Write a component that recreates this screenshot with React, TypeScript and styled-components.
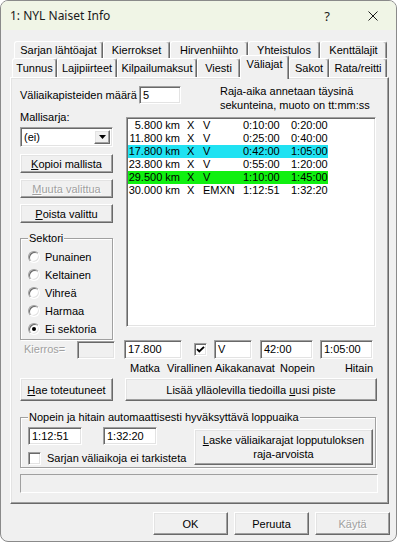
import React from "react";
import styled, { createGlobalStyle, css } from "styled-components";

const GlobalStyle = createGlobalStyle`
  html, body { margin: 0; padding: 0; background: #ffffff; }
  body {
    font-family: "Liberation Sans", Arial, sans-serif;
    font-size: 11px;
    color: #000;
  }
  * { box-sizing: border-box; }
`;

const raised = css`
  border: 1px solid;
  border-color: #ffffff #696969 #696969 #ffffff;
  box-shadow: inset -1px -1px 0 #a0a0a0, inset 1px 1px 0 #e3e3e3;
`;

const sunken = css`
  border: 1px solid;
  border-color: #a0a0a0 #ffffff #ffffff #a0a0a0;
  box-shadow: inset 1px 1px 0 #696969, inset -1px -1px 0 #e3e3e3;
`;

const Window = styled.div`
  width: 397px;
  height: 542px;
  border: 1px solid #8a8a8a;
  border-radius: 8px;
  overflow: hidden;
  background: #f0f0f0;
  display: flex;
  flex-direction: column;
`;

const TitleBar = styled.div`
  height: 29px;
  flex: none;
  background: #f0f5e6;
  display: flex;
  align-items: center;
  padding-left: 9px;
  font-family: "Noto Sans", "Open Sans", sans-serif;
  font-size: 12px;
  color: #1a1a1a;
`;

const TitleText = styled.div`
  flex: 1;
  white-space: nowrap;
`;

const CaptionButton = styled.div`
  width: 46px;
  height: 29px;
  display: flex;
  align-items: center;
  justify-content: center;
  font-size: 13px;
`;

const TabStrip = styled.div`
  padding-top: 11px;
  flex: none;
`;

const TabRow = styled.div<{ $indent: number; $h: number }>`
  display: flex;
  height: ${(p) => p.$h}px;
  padding-left: ${(p) => p.$indent}px;
`;

const Tab = styled.div<{ $w: number; $active?: boolean }>`
  width: ${(p) => p.$w}px;
  flex: none;
  display: flex;
  align-items: center;
  justify-content: center;
  white-space: nowrap;
  background: #f0f0f0;
  border-top: 1px solid #ffffff;
  border-left: 1px solid #ffffff;
  border-right: 1px solid #696969;
  box-shadow: inset -1px 0 0 #a0a0a0;
  border-radius: 3px 3px 0 0;
  ${(p) =>
    p.$active &&
    css`
      height: 24px;
      align-self: flex-end;
      margin-bottom: -2px;
      position: relative;
      z-index: 1;
      align-items: flex-start;
      padding-top: 2px;
    `}
`;

const Panel = styled.div`
  ${raised};
  margin-left: 9px;
  width: 379px;
  height: 427px;
  flex: none;
  padding: 7px 0 0 9px;
  display: flex;
  flex-direction: column;
`;

const TopRow = styled.div`
  display: flex;
  height: 22px;
  flex: none;
`;

const CountLabel = styled.div`
  width: 119px;
  flex: none;
  line-height: 13px;
  padding-top: 4px;
  white-space: nowrap;
`;

const Hint = styled.div`
  margin-left: 39px;
  margin-top: -1px;
  line-height: 14px;
  white-space: nowrap;
`;

const Field = styled.div<{ $w: number; $h?: number; $ml?: number; $disabled?: boolean }>`
  ${sunken};
  width: ${(p) => p.$w}px;
  height: ${(p) => p.$h ?? 19}px;
  margin-left: ${(p) => p.$ml ?? 0}px;
  flex: none;
  background: ${(p) => (p.$disabled ? "#f0f0f0" : "#ffffff")};
  display: flex;
  align-items: center;
  padding-left: 3px;
  line-height: 13px;
  white-space: nowrap;
`;

const MainRow = styled.div`
  display: flex;
  align-items: flex-start;
  flex: none;
`;

const LeftColumn = styled.div`
  width: 93px;
  flex: none;
  display: flex;
  flex-direction: column;
`;

const CaptionLabel = styled.div`
  margin-top: 4px;
  line-height: 13px;
`;

const Combo = styled.div`
  ${sunken};
  margin-top: 3px;
  height: 20px;
  background: #ffffff;
  display: flex;
  align-items: stretch;
  padding: 2px;
`;

const ComboText = styled.div`
  flex: 1;
  display: flex;
  align-items: center;
  padding-left: 1px;
`;

const ComboArrow = styled.div`
  ${raised};
  width: 16px;
  background: #f0f0f0;
  display: flex;
  align-items: center;
  justify-content: center;
`;

const Button = styled.button<{ $w: number; $h: number; $mt?: number; $ml?: number; $disabled?: boolean }>`
  ${raised};
  appearance: none;
  margin: ${(p) => p.$mt ?? 0}px 0 0 ${(p) => p.$ml ?? 0}px;
  padding: 0;
  width: ${(p) => p.$w}px;
  height: ${(p) => p.$h}px;
  flex: none;
  background: #f0f0f0;
  font-family: "Liberation Sans", Arial, sans-serif;
  font-size: 11px;
  line-height: 14px;
  text-align: center;
  display: flex;
  align-items: center;
  justify-content: center;
  white-space: nowrap;
  color: ${(p) => (p.$disabled ? "#a0a0a0" : "#000000")};
  text-shadow: ${(p) => (p.$disabled ? "1px 1px 0 #ffffff" : "none")};
`;

const GroupBox = styled.fieldset<{ $w: number; $mt: number }>`
  margin: ${(p) => p.$mt}px 0 0 0;
  padding: 3px 2px 1px 7px;
  min-width: 0;
  width: ${(p) => p.$w}px;
  flex: none;
  border: 1px solid #a0a0a0;
  box-shadow: inset 1px 1px 0 #ffffff, 1px 1px 0 #ffffff;
`;

const Legend = styled.legend`
  padding: 0 1px;
  line-height: 13px;
  background: #f0f0f0;
  white-space: nowrap;
`;

const RadioRow = styled.div`
  height: 18px;
  display: flex;
  align-items: center;
  gap: 5px;
  white-space: nowrap;
`;

const RadioCircle = styled.span<{ $on?: boolean }>`
  width: 12px;
  height: 12px;
  flex: none;
  border-radius: 50%;
  background: #ffffff;
  border: 1px solid;
  border-color: #a0a0a0 #ffffff #ffffff #a0a0a0;
  box-shadow: inset 1px 1px 0 #696969, inset -1px -1px 0 #e3e3e3;
  display: flex;
  align-items: center;
  justify-content: center;
  &::after {
    content: "";
    width: 4px;
    height: 4px;
    border-radius: 50%;
    background: #000000;
    display: ${(p) => (p.$on ? "block" : "none")};
  }
`;

const ListBox = styled.div`
  ${sunken};
  width: 250px;
  height: 210px;
  margin: 10px 0 0 13px;
  flex: none;
  background: #ffffff;
  padding: 1px 0 0 1px;
`;

const ListRow = styled.div<{ $bg?: string }>`
  display: grid;
  grid-template-columns: 59px 16px 40px 48px 37px;
  width: 200px;
  height: 13px;
  line-height: 13px;
  background: ${(p) => p.$bg ?? "transparent"};
  white-space: nowrap;
`;

const DistCell = styled.span`
  text-align: right;
  padding-right: 7px;
`;

const FieldsRow = styled.div`
  display: flex;
  align-items: flex-start;
  flex: none;
`;

const RoundBox = styled.div`
  width: 104px;
  height: 19px;
  flex: none;
  display: flex;
  align-items: center;
`;

const DimLabel = styled.div`
  width: 57px;
  flex: none;
  padding-left: 4px;
  color: #a0a0a0;
  text-shadow: 1px 1px 0 #ffffff;
  line-height: 13px;
`;

const PointEditor = styled.div`
  display: flex;
  flex-direction: column;
`;

const InputsLine = styled.div`
  display: flex;
  align-items: center;
  height: 19px;
`;

const CheckBox = styled.span<{ $ml?: number }>`
  ${sunken};
  width: 13px;
  height: 13px;
  flex: none;
  margin-left: ${(p) => p.$ml ?? 0}px;
  background: #ffffff;
  display: flex;
  align-items: center;
  justify-content: center;
`;

const LabelsLine = styled.div`
  margin-top: 3px;
  padding-left: 6px;
  display: grid;
  grid-template-columns: 37px 48px 65px 67px 26px;
  line-height: 13px;
  white-space: nowrap;
`;

const RightLabel = styled.span`
  justify-self: end;
`;

const ButtonsRow = styled.div`
  display: flex;
  margin-top: 3px;
  flex: none;
`;

const LimitsLayout = styled.div`
  display: flex;
  align-items: flex-start;
`;

const LimitsLeft = styled.div`
  width: 166px;
  flex: none;
  display: flex;
  flex-direction: column;
`;

const LimitFields = styled.div`
  display: flex;
  gap: 21px;
`;

const CheckRow = styled.div`
  margin-top: 5px;
  height: 16px;
  display: flex;
  align-items: center;
  gap: 6px;
  white-space: nowrap;
`;

const StatusBar = styled.div`
  margin-top: 6px;
  width: 358px;
  height: 19px;
  flex: none;
  border: 1px solid;
  border-color: #a0a0a0 #ffffff #ffffff #a0a0a0;
`;

const Footer = styled.div`
  display: flex;
  justify-content: flex-end;
  gap: 6px;
  margin-top: 8px;
  padding-right: 6px;
  flex: none;
`;

const Check = () => (
  <svg width="9" height="9" viewBox="0 0 9 9">
    <path d="M1 4.2 L3.3 6.5 L8 1.8" stroke="#000" strokeWidth="1.9" fill="none" />
  </svg>
);

const backTabs = [
  { label: "Sarjan lähtöajat", w: 89 },
  { label: "Kierrokset", w: 67 },
  { label: "Hirvenhiihto", w: 78 },
  { label: "Yhteistulos", w: 72 },
  { label: "Kenttälajit", w: 67 },
];

const frontTabs = [
  { label: "Tunnus", w: 45 },
  { label: "Lajipiirteet", w: 60 },
  { label: "Kilpailumaksut", w: 80 },
  { label: "Viesti", w: 43 },
  { label: "Väliajat", w: 49, active: true },
  { label: "Sakot", w: 40 },
  { label: "Rata/reitti", w: 58 },
];

const splits = [
  { d: "5.800 km", v: "V", a: "0:10:00", b: "0:20:00" },
  { d: "11.800 km", v: "V", a: "0:25:00", b: "0:40:00" },
  { d: "17.800 km", v: "V", a: "0:42:00", b: "1:05:00", bg: "#20e2f2" },
  { d: "23.800 km", v: "V", a: "0:55:00", b: "1:20:00" },
  { d: "29.500 km", v: "V", a: "1:10:00", b: "1:45:00", bg: "#10f010" },
  { d: "30.000 km", v: "EMXN", a: "1:12:51", b: "1:32:20" },
];

const sectors = ["Punainen", "Keltainen", "Vihreä", "Harmaa", "Ei sektoria"];

export default function App() {
  return (
    <>
      <GlobalStyle />
      <Window>
        <TitleBar>
          <TitleText>1: NYL Naiset Info</TitleText>
          <CaptionButton>?</CaptionButton>
          <CaptionButton>
            <svg width="10" height="10" viewBox="0 0 10 10">
              <path d="M0.5 0.5 L9.5 9.5 M9.5 0.5 L0.5 9.5" stroke="#1a1a1a" strokeWidth="1" />
            </svg>
          </CaptionButton>
        </TitleBar>

        <TabStrip>
          <TabRow $indent={13} $h={17}>
            {backTabs.map((t) => (
              <Tab key={t.label} $w={t.w}>
                {t.label}
              </Tab>
            ))}
          </TabRow>
          <TabRow $indent={11} $h={19}>
            {frontTabs.map((t) => (
              <Tab key={t.label} $w={t.w} $active={t.active}>
                {t.label}
              </Tab>
            ))}
          </TabRow>
        </TabStrip>

        <Panel>
          <TopRow>
            <CountLabel>Väliaikapisteiden määrä</CountLabel>
            <Field $w={42} $h={18} style={{ marginTop: 1 }}>
              5
            </Field>
            <Hint>
              Raja-aika annetaan täysinä
              <br />
              sekunteina, muoto on tt:mm:ss
            </Hint>
          </TopRow>

          <MainRow>
            <LeftColumn>
              <CaptionLabel>Mallisarja:</CaptionLabel>
              <Combo>
                <ComboText>(ei)</ComboText>
                <ComboArrow>
                  <svg width="7" height="4" viewBox="0 0 7 4">
                    <path d="M0 0 H7 L3.5 4 Z" fill="#000" />
                  </svg>
                </ComboArrow>
              </Combo>
              <Button $w={93} $h={19} $mt={7}>
                <span>
                  <u>K</u>opioi mallista
                </span>
              </Button>
              <Button $w={93} $h={19} $mt={6} $disabled>
                <span>
                  <u>M</u>uuta valittua
                </span>
              </Button>
              <Button $w={93} $h={19} $mt={6}>
                <span>
                  <u>P</u>oista valittu
                </span>
              </Button>
              <GroupBox $w={93} $mt={9}>
                <Legend>Sektori</Legend>
                {sectors.map((s, i) => (
                  <RadioRow key={s}>
                    <RadioCircle $on={i === sectors.length - 1} />
                    <span>{s}</span>
                  </RadioRow>
                ))}
              </GroupBox>
            </LeftColumn>

            <ListBox>
              {splits.map((r) => (
                <ListRow key={r.d} $bg={r.bg}>
                  <DistCell>{r.d}</DistCell>
                  <span>X</span>
                  <span>{r.v}</span>
                  <span>{r.a}</span>
                  <span>{r.b}</span>
                </ListRow>
              ))}
            </ListBox>
          </MainRow>

          <FieldsRow>
            <RoundBox>
              <DimLabel>Kierros=</DimLabel>
              <Field $w={38} $h={18} $disabled />
            </RoundBox>
            <PointEditor>
              <InputsLine>
                <Field $w={58}>17.800</Field>
                <CheckBox $ml={12}>
                  <Check />
                </CheckBox>
                <Field $w={38} $ml={7}>
                  V
                </Field>
                <Field $w={53} $ml={8}>
                  42:00
                </Field>
                <Field $w={53} $ml={7}>
                  1:05:00
                </Field>
              </InputsLine>
              <LabelsLine>
                <span>Matka</span>
                <span>Virallinen</span>
                <span>Aikakanavat</span>
                <span>Nopein</span>
                <RightLabel>Hitain</RightLabel>
              </LabelsLine>
            </PointEditor>
          </FieldsRow>

          <ButtonsRow>
            <Button $w={93} $h={23}>
              <span>
                <u>H</u>ae toteutuneet
              </span>
            </Button>
            <Button $w={252} $h={23} $ml={12}>
              <span>
                Lisää ylläolevilla tiedoilla <u>u</u>usi piste
              </span>
            </Button>
          </ButtonsRow>

          <GroupBox $w={356} $mt={10}>
            <Legend>Nopein ja hitain automaattisesti hyväksyttävä loppuaika</Legend>
            <LimitsLayout>
              <LimitsLeft>
                <LimitFields>
                  <Field $w={54} $h={18}>
                    1:12:51
                  </Field>
                  <Field $w={54} $h={18}>
                    1:32:20
                  </Field>
                </LimitFields>
                <CheckRow>
                  <CheckBox />
                  <span>Sarjan väliaikoja ei tarkisteta</span>
                </CheckRow>
              </LimitsLeft>
              <Button $w={179} $h={36} $mt={2}>
                <span>
                  <u>L</u>aske väliaikarajat lopputuloksen
                  <br />
                  raja-arvoista
                </span>
              </Button>
            </LimitsLayout>
          </GroupBox>

          <StatusBar />
        </Panel>

        <Footer>
          <Button $w={75} $h={23}>OK</Button>
          <Button $w={75} $h={23}>Peruuta</Button>
          <Button $w={75} $h={23} $disabled>
            Käytä
          </Button>
        </Footer>
      </Window>
    </>
  );
}
